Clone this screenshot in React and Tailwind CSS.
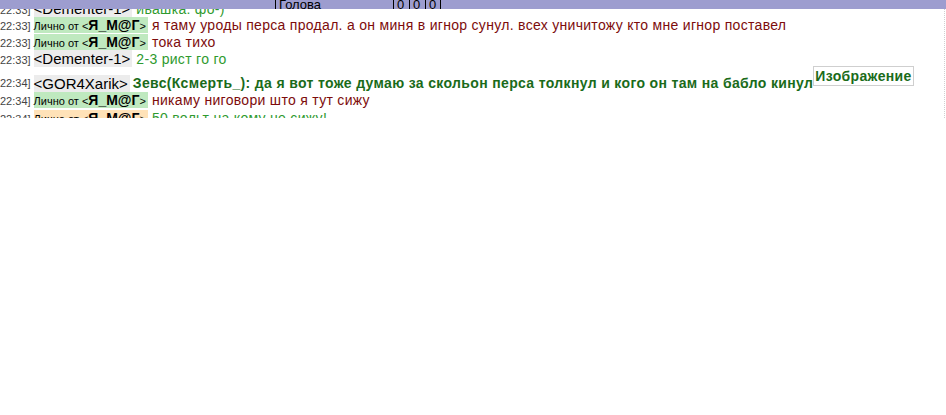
export default function App() {
  const ts = "text-[11px] text-[#444] mr-[3px]";
  const Priv = ({ bg = "bg-[#bfe9bf]" }) => (
    <span className={`${bg} pr-[2px]`}>
      <span className="text-[11px] text-black">Лично от </span>
      <span className="text-[11px] text-black">&lt;</span>
      <span className="text-[14px] font-bold text-black">Я_М@Г</span>
      <span className="text-[11px] text-black">&gt;</span>
    </span>
  );
  const Nick = ({ name }) => (
    <span className="bg-[#ececec] text-[15px] text-black pr-[2px]">&lt;{name}&gt;</span>
  );
  const red = "text-[14px] tracking-[0.3px] text-[#7d0c0c] ml-[4px]";
  const green = "text-[14px] tracking-[0.3px] text-[#2f9a2f] ml-[4px]";
  return (
    <div className="w-[946px] h-[415px] bg-white overflow-hidden flex flex-col font-['Liberation_Sans',Arial,sans-serif]">
      <div className="h-[9px] bg-[#9d9dcf] overflow-hidden relative z-10">
        <div className="flex h-[18px] -mt-[3px] text-[13px] text-black leading-[16px]">
          <div className="w-[275px]" />
          <div className="w-[118px] border-l border-black pl-[3px]">Голова</div>
          <div className="w-[16px] border-l border-black pl-[3px]">0</div>
          <div className="w-[16px] border-l border-black pl-[3px]">0</div>
          <div className="w-[16px] border-l border-r border-black pl-[3px]">0</div>
        </div>
      </div>
      <div className="h-[109px] w-[945px] overflow-hidden border-r border-dotted border-[#d0d0d0]">
        <div className="-mt-[9px] whitespace-nowrap text-[14px]">
          <div className="h-[17px] leading-[17px]">
            <span className={ts}>22:33]</span>
            <Nick name="Dementer-1" />
            <span className={green}>ивашка: фо-)</span>
          </div>
          <div className="h-[17px] leading-[17px]">
            <span className={ts}>22:33]</span>
            <Priv />
            <span className={red}>я таму уроды перса продал. а он миня в игнор сунул. всех уничитожу кто мне игнор поставел</span>
          </div>
          <div className="h-[16px] leading-[17px]">
            <span className={ts}>22:33]</span>
            <Priv />
            <span className={red}>тока тихо</span>
          </div>
          <div className="h-[16px] leading-[17px]">
            <span className={ts}>22:33]</span>
            <Nick name="Dementer-1" />
            <span className={green}>2-3 рист го го</span>
          </div>
          <div className="h-[26px] flex items-end leading-[17px]">
            <span className={ts}>22:34]</span>
            <Nick name="GOR4Xarik" />
            <span className="text-[14px] font-bold tracking-[0.35px] text-[#1a6b1a] ml-[3px]">Зевс(Ксмерть_): да я вот тоже думаю за скольон перса толкнул и кого он там на бабло кинул</span>
            <span className="self-start border border-[#cfcfcf] text-[14px] font-bold tracking-[0.35px] text-[#1a6b1a] px-[1px] leading-[18px]">Изображение</span>
          </div>
          <div className="h-[18px] leading-[17px]">
            <span className={ts}>22:34]</span>
            <Priv />
            <span className={red}>никаму ниговори што я тут сижу</span>
          </div>
          <div className="h-[18px] leading-[17px]">
            <span className={ts}>22:34]</span>
            <Priv bg="bg-[#ffe2b8]" />
            <span className={green}>50 вольт на кому не сижу!</span>
          </div>
        </div>
      </div>
    </div>
  );
}
